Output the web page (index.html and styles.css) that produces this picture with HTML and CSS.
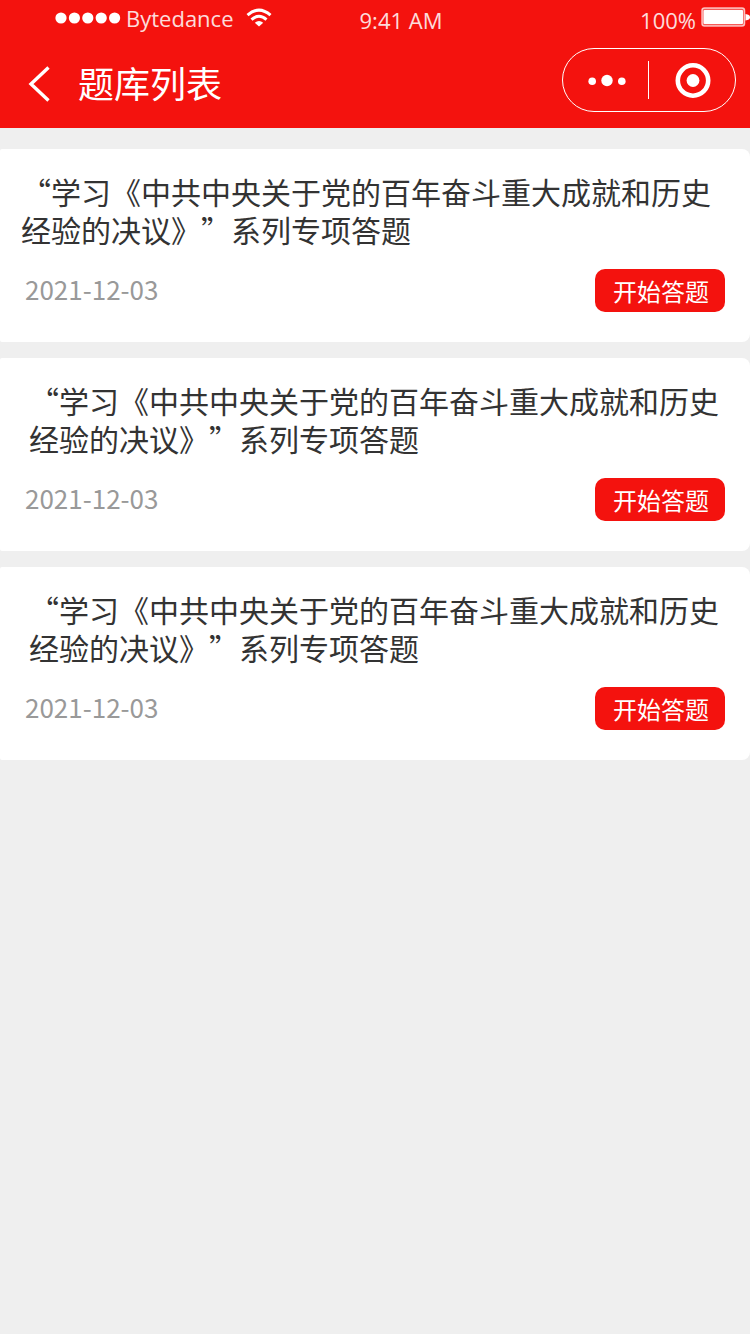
FILE: index.html
```html
<!DOCTYPE html>
<html lang="zh-CN">
<head>
<meta charset="utf-8">
<meta name="viewport" content="width=device-width, initial-scale=1">
<title>题库列表</title>
<link rel="stylesheet" href="styles.css">
</head>
<body>
<header class="header">
  <div class="status">
    <div class="status-left">
      <svg class="signal" width="70" height="12" viewBox="0 0 70 12" fill="#fff" aria-hidden="true">
        <circle cx="9" cy="6" r="5.6"/><circle cx="22.4" cy="6" r="5.6"/><circle cx="35.8" cy="6" r="5.6"/><circle cx="49.2" cy="6" r="5.6"/><circle cx="62.6" cy="6" r="5.6"/>
      </svg>
      <span class="carrier">Bytedance</span>
      <svg class="wifi" width="26" height="20" viewBox="0 0 26 20" fill="none" stroke="#fff" aria-hidden="true">
        <path d="M1.500 7.200Q13-3 24.500 7.200" stroke-width="3"/>
        <path d="M5.500 11.600Q13 5 20.500 11.600" stroke-width="3"/>
        <path d="M8.800 14.800Q13 11 17.200 14.800L13 18.600Z" fill="#fff" stroke="none"/>
      </svg>
    </div>
    <span class="time">9:41 AM</span>
    <div class="status-right">
      <span class="percent">100%</span>
      <svg width="49" height="20" viewBox="0 0 49 20" aria-hidden="true">
        <rect x="1" y="1" width="42.500" height="18" rx="2.500" fill="#fff" fill-opacity=".3" stroke="#fff" stroke-opacity=".7" stroke-width="1.500"/>
        <rect x="2.500" y="3" width="39.500" height="14" rx="1" fill="#fff"/>
        <path d="M44.500 7Q49 7.500 49 10.200T44.500 13.500Z" fill="#fff"/>
      </svg>
    </div>
  </div>
  <nav class="nav">
    <button class="back" type="button" aria-label="返回">
      <svg width="22" height="36" viewBox="0 0 22 36" fill="none" stroke="#fff" stroke-width="3.400" aria-hidden="true"><path d="M20.500 1.500L3 18L20.500 34.500"/></svg>
    </button>
    <h1 class="page-title">题库列表</h1>
    <div class="capsule">
      <button class="capsule-button" type="button" aria-label="更多">
        <svg width="40" height="14" viewBox="0 0 40 14" fill="#fff" aria-hidden="true"><circle cx="5.200" cy="8.300" r="3.800"/><circle cx="20" cy="7.500" r="5.700"/><circle cx="34.800" cy="8.300" r="3.800"/></svg>
      </button>
      <span class="divider"></span>
      <button class="capsule-button" type="button" aria-label="关闭">
        <svg width="36" height="36" viewBox="0 0 36 36" aria-hidden="true"><circle cx="18" cy="18.500" r="15.200" fill="none" stroke="#fff" stroke-width="4.600"/><circle cx="18" cy="18.500" r="6.400" fill="#fff"/></svg>
      </button>
    </div>
  </nav>
</header>
<main class="list">
  <article class="card">
    <h2 class="card-title">“学习《中共中央关于党的百年奋斗重大成就和历史经验的决议》”系列专项答题</h2>
    <div class="card-foot">
      <time class="date" datetime="2021-12-03">2021-12-03</time>
      <button class="start" type="button">开始答题</button>
    </div>
  </article>
  <article class="card card-inset">
    <h2 class="card-title">“学习《中共中央关于党的百年奋斗重大成就和历史经验的决议》”系列专项答题</h2>
    <div class="card-foot">
      <time class="date" datetime="2021-12-03">2021-12-03</time>
      <button class="start" type="button">开始答题</button>
    </div>
  </article>
  <article class="card card-inset">
    <h2 class="card-title">“学习《中共中央关于党的百年奋斗重大成就和历史经验的决议》”系列专项答题</h2>
    <div class="card-foot">
      <time class="date" datetime="2021-12-03">2021-12-03</time>
      <button class="start" type="button">开始答题</button>
    </div>
  </article>
</main>
</body>
</html>
```

FILE: styles.css
```css
* {
  box-sizing: border-box;
}

body {
  margin: 0;
  min-height: 100vh;
  background: #efefef;
  color: #333;
  font-family: "Noto Sans CJK SC", "Noto Sans", sans-serif;
}

button {
  padding: 0;
  border: 0;
  background: none;
  color: inherit;
  font: inherit;
  cursor: pointer;
}

svg {
  display: block;
}

.header {
  background: #f4120e;
  color: #fff;
}

.status {
  display: grid;
  grid-template-columns: 1fr auto 1fr;
  align-items: center;
  height: 40px;
  padding-left: 52px;
  font-family: "Open Sans", "Noto Sans", sans-serif;
  font-size: 22px;
  line-height: 32px;
}

.carrier,
.time,
.percent {
  opacity: 0.85;
}

.status-left,
.status-right {
  display: flex;
  align-items: center;
}

.status-left {
  padding-bottom: 4px;
}

.signal {
  margin-right: 4px;
}

.wifi {
  margin-left: 12px;
}

.status-right {
  justify-content: flex-end;
  align-items: flex-start;
  gap: 5px;
}

.status-right svg {
  margin-top: 3px;
}

.nav {
  display: flex;
  align-items: center;
  height: 88px;
  padding: 0 14px 8px 28px;
}

.back {
  padding-top: 8px;
}

.page-title {
  flex: 1;
  margin: 0;
  padding: 4px 0 0 28px;
  font-size: 36px;
  font-weight: 400;
  line-height: 52px;
}

.capsule {
  display: grid;
  grid-template-columns: 1fr 1px 1fr;
  align-items: center;
  width: 174px;
  height: 64px;
  padding-right: 2px;
  border: 1px solid #fff;
  border-radius: 32px;
}

.capsule-button {
  display: flex;
  align-items: center;
  justify-content: center;
  height: 100%;
}

.capsule-button:first-child {
  padding-left: 4px;
}

.capsule-button:last-child {
  padding-left: 4px;
}

.divider {
  height: 38px;
  background: #fff;
}

.list {
  display: flex;
  flex-direction: column;
  gap: 16px;
  padding-top: 21px;
}

.card {
  padding: 23px 25px 30px;
  border-radius: 2px 8px 8px 2px;
  background: #fff;
}

.card-title {
  margin: 0 -4px 21px;
  font-size: 30px;
  font-weight: 400;
  line-height: 38px;
  text-spacing-trim: space-all;
}

.card-inset .card-title {
  margin-left: 4px;
}

.card-foot {
  display: flex;
  align-items: flex-start;
  justify-content: space-between;
}

.date {
  color: #999;
  font-size: 26px;
  line-height: 40px;
}

.start {
  width: 130px;
  height: 43px;
  padding-left: 2px;
  border-radius: 10px;
  background: #f4120e;
  color: #fff;
  font-size: 24px;
  line-height: 40px;
}
```
